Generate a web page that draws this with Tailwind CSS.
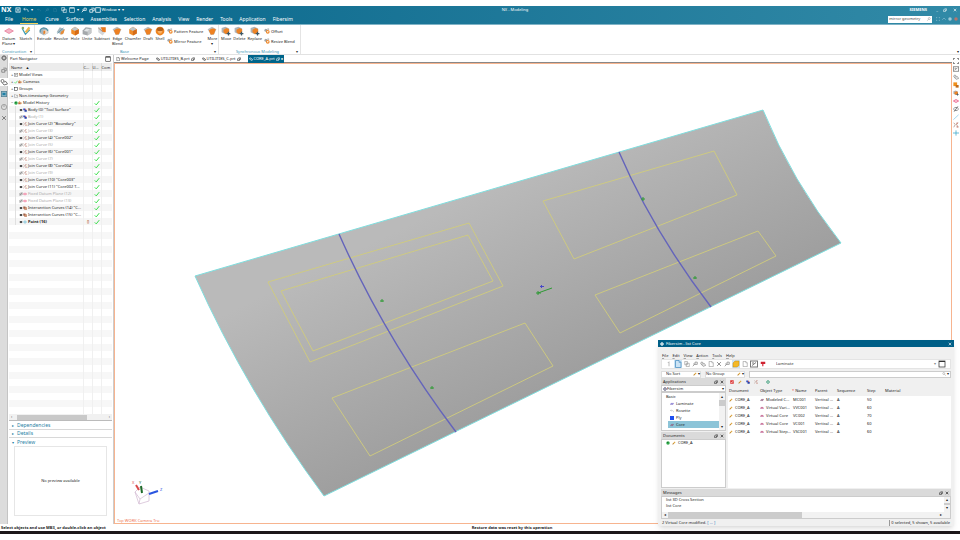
<!DOCTYPE html>
<html lang="en">
<head>
  <meta charset="UTF-8" />
  <meta name="viewport" content="width=device-width, initial-scale=1" />
  <title>NX - Modeling</title>
  <script src="https://cdn.jsdelivr.net/npm/@tailwindcss/browser@4"></script>
</head>
<body class="h-screen overflow-hidden bg-white pt-1.5 pb-1.5 flex flex-col font-['Noto_Sans','Open_Sans',sans-serif] text-[4px] leading-[6px] text-[#1c1c1c]">

<!-- Shared icons -->
<svg class="hidden">
  <symbol id="i-plane" viewBox="0 0 16 16"><path d="M1 8l7-4 7 4-7 4z" fill="#f5b5c6" stroke="#e0688c"/></symbol>
  <symbol id="i-sketch" viewBox="0 0 16 16"><path d="M2 4l5 9 7-7" fill="none" stroke="#3d9db5" stroke-width="2"/><path d="M6 9l6-8 3 2-6 8z" fill="#f0b64b"/><circle cx="3" cy="3" r="2" fill="#8a6"/></symbol>
  <symbol id="i-extrude" viewBox="0 0 16 16"><path d="M1 6l6-4 8 3v6l-7 4-7-4z" fill="#a9b8bf"/><path d="M7 7l7-2v6l-6 3z" fill="#e8dcd0"/><path d="M7 8l3-1v5l-3 1z" fill="#e8822a"/><path d="M2 10c-1-8 10-9 12-2" fill="none" stroke="#5b97aa" stroke-width="2"/></symbol>
  <symbol id="i-revolve" viewBox="0 0 16 16"><path d="M1 10l5-8 8 3-4 9z" fill="#a6b6be"/><path d="M8 9l6-4-2 7-5 2z" fill="#e78c37"/><path d="M2 12L12 3" stroke="#4d8ca5" stroke-width="1"/></symbol>
  <symbol id="i-solid" viewBox="0 0 16 16"><path d="M2 5l6-4 6 4v7l-6 3-6-3z" fill="#ef8a26"/><path d="M2 5l6 3 6-3-6-4z" fill="#c2c6c8"/><path d="M8 8v7l6-3V5z" fill="#d56b17"/></symbol>
  <symbol id="i-gray" viewBox="0 0 16 16"><path d="M1 7l5-5 9 1v8l-6 4-8-2z" fill="#a4a8ab"/><path d="M3 8l4-4 6 1-3 4z" fill="#e2e5e6"/><path d="M9 8l6-5v8l-6 4z" fill="#c6c9cb"/></symbol>
  <symbol id="i-cut" viewBox="0 0 16 16"><path d="M2 2h11v8l-4 5-7-5z" fill="#d5d7d9"/><path d="M6 2h8v8l-5-1z" fill="#ec7b1c"/><path d="M2 3l7 6" stroke="#8a5a44"/></symbol>
  <symbol id="i-edge" viewBox="0 0 16 16"><path d="M1 5l7-4 7 4-4 9H6z" fill="#b9bcbe"/><path d="M3 7q5-5 11-2l-3 8-5 1z" fill="#ee8122"/></symbol>
  <symbol id="i-shell" viewBox="0 0 16 16"><circle cx="8" cy="8" r="7" fill="#ee851f"/><ellipse cx="8" cy="5" rx="5" ry="3" fill="#b4611d"/><path d="M4 8h8l-2 4H6z" fill="#f9b063"/></symbol>
  <symbol id="i-gears" viewBox="0 0 16 16"><circle cx="5" cy="6" r="4" fill="#a3a7a9"/><circle cx="10" cy="10" r="5" fill="#ef8829"/><circle cx="10" cy="10" r="2" fill="#fff"/><path d="M11 1v4M9 3h5" stroke="#666"/></symbol>
  <symbol id="i-move" viewBox="0 0 16 16"><path d="M1 3l6-2 6 3v6l-6 3-6-3z" fill="#b0b4b7"/><path d="M4 6l5-3 4 2v5l-5 3-4-3z" fill="#ed8427"/><path d="M9 12h6M12 9v6" stroke="#3e5968" stroke-width="2"/></symbol>
  <symbol id="i-eye" viewBox="0 0 16 16"><path d="M1 8q7-9 14 0-7 9-14 0z" fill="#666"/><circle cx="8" cy="8" r="3" fill="#111"/></symbol>
  <symbol id="i-eyeoff" viewBox="0 0 16 16"><path d="M1 8q7-9 14 0-7 9-14 0z" fill="none" stroke="#777" stroke-width="2"/><path d="M3 15L13 1" stroke="#555" stroke-width="2"/></symbol>
  <symbol id="i-body" viewBox="0 0 16 16"><path d="M1 2h8v7H1z" fill="#3550c0"/><path d="M6 7h9v8H6z" fill="#2440a8"/><path d="M8 2l5 4-4 3z" fill="#d64545"/></symbol>
  <symbol id="i-join" viewBox="0 0 16 16"><path d="M2 2l4 5-4 7M14 2q-8 3-4 6t3 7" fill="none" stroke="#b08a7c" stroke-width="2"/><path d="M9 3h4M9 13h5" stroke="#c65b4e" stroke-width="2"/></symbol>
  <symbol id="i-datum" viewBox="0 0 16 16"><path d="M1 8l7-4 7 4-7 4z" fill="#fbd3de" stroke="#e8527d" stroke-width="2"/></symbol>
  <symbol id="i-inter" viewBox="0 0 16 16"><path d="M1 2h9v9H1z" fill="#a2674c"/><path d="M6 6h9v9H6z" fill="#d8956d" stroke="#7b3b2b"/></symbol>
  <symbol id="i-point" viewBox="0 0 16 16"><path d="M0 8h16M8 1v14" stroke="#3aa5c9" stroke-width="2"/></symbol>
  <symbol id="i-box" viewBox="0 0 16 16"><rect x="2" y="2" width="12" height="12" fill="none" stroke="currentColor" stroke-width="2"/></symbol>
  <symbol id="i-views" viewBox="0 0 16 16"><rect x="1" y="2" width="14" height="12" fill="#fff" stroke="#777" stroke-width="2"/><path d="M4 11l8-6M4 6h4" stroke="#777" stroke-width="2"/></symbol>
  <symbol id="i-camera" viewBox="0 0 16 16"><path d="M1 5h10v8H1z" fill="#b86a3c"/><path d="M11 8l4-3v8z" fill="#e49345"/><circle cx="6" cy="4" r="3" fill="#e0a050"/></symbol>
  <symbol id="i-folder" viewBox="0 0 16 16"><path d="M1 13V3h5l2 2h7v8z" fill="#fff" stroke="#777" stroke-width="2"/></symbol>
  <symbol id="i-hist" viewBox="0 0 16 16"><circle cx="8" cy="8" r="7" fill="#2faa4a"/><path d="M4 4h5v4H4z" fill="#1c7433"/></symbol>
  <symbol id="i-check" viewBox="0 0 16 16"><path d="M2 9l4 4 8-10" fill="none" stroke="#2fdc40" stroke-width="2.5"/></symbol>
  <symbol id="i-pencil" viewBox="0 0 16 16"><path d="M2 14l2-5 7-7 3 3-7 7z" fill="#e0a53a"/><path d="M2 14l2-5 3 3z" fill="#8a5a20"/></symbol>
  <symbol id="i-core" viewBox="0 0 16 16"><path d="M1 10l5-5h9l-4 6z" fill="#a7718f" stroke="#6f4666"/></symbol>
  <symbol id="i-vcore" viewBox="0 0 16 16"><path d="M1 10l3-5h8l3 5z" fill="#e0607c" stroke="#8b54a2"/></symbol>
  <symbol id="i-lam" viewBox="0 0 16 16"><path d="M1 9l3-4h11l-3 5H1z" fill="#7d87e6" stroke="#8b54a2"/></symbol>
  <symbol id="i-search" viewBox="0 0 16 16"><circle cx="9" cy="6" r="4" fill="none" stroke="#777" stroke-width="1.5"/><path d="M6 9l-5 6" stroke="#777" stroke-width="1.5"/></symbol>
  <symbol id="i-gear" viewBox="0 0 16 16"><circle cx="8" cy="8" r="5" fill="none" stroke="currentColor" stroke-width="3"/><path d="M8 0v16M0 8h16" stroke="currentColor" stroke-width="2"/><circle cx="8" cy="8" r="2" fill="#fff"/></symbol>
  <symbol id="i-part" viewBox="0 0 16 16"><circle cx="5" cy="6" r="3" fill="none" stroke="currentColor" stroke-width="2"/><path d="M4 9l4 5 7-2-3-5-4 1" fill="none" stroke="currentColor" stroke-width="2"/></symbol>
  <symbol id="i-page" viewBox="0 0 16 16"><path d="M3 1h7l4 4v10H3z" fill="none" stroke="currentColor" stroke-width="1.5"/><path d="M10 1v4h4" fill="none" stroke="currentColor"/></symbol>
  <symbol id="i-copy" viewBox="0 0 16 16"><path d="M2 1h7v9H2zM6 6h8v9H6z" fill="none" stroke="currentColor" stroke-width="1.5"/></symbol>
  <symbol id="i-save" viewBox="0 0 16 16"><path d="M2 2h12v12H2zM5 2v5h6V2M5 14v-4h6v4" fill="none" stroke="currentColor" stroke-width="1.5"/></symbol>
  <symbol id="i-tool" viewBox="0 0 16 16"><path d="M2 14l6-6M8 3h6v6H8zM3 8h4" fill="none" stroke="currentColor" stroke-width="2"/></symbol>
  <symbol id="i-fit" viewBox="0 0 16 16"><path d="M1 5V1h4M11 1h4v4M15 11v4h-4M5 15H1v-4" fill="none" stroke="currentColor" stroke-width="2"/></symbol>
  <symbol id="i-max" viewBox="0 0 16 16"><rect x="2" y="2" width="12" height="12" fill="none" stroke="currentColor" stroke-width="1.5"/><path d="M2 3h12" stroke="currentColor" stroke-width="2"/></symbol>
  <symbol id="i-x" viewBox="0 0 16 16"><path d="M3 3l10 10M13 3L3 13" stroke="currentColor" stroke-width="2.5"/></symbol>
  <symbol id="i-pin" viewBox="0 0 16 16"><path d="M2 7h8v7H2zM6 3h8v7h-4" fill="none" stroke="currentColor" stroke-width="2"/></symbol>
  <symbol id="i-undo" viewBox="0 0 16 16"><path d="M5 2L2 6l4 3M2 6h8q4 0 4 7" fill="none" stroke="currentColor" stroke-width="1.5"/></symbol>
</svg>

<!-- Title bar and menu -->
<header class="bg-linear-to-r from-[#00658a] to-[#318aa7] text-white border-b border-[#7fb3c6]">
  <div class="flex items-center h-2 px-px">
    <div class="flex-1 flex items-center gap-0.5">
      <span class="text-[7px] leading-2 font-bold">NX</span>
      <svg class="size-1.5 ml-0.5"><use href="#i-save"/></svg>
      <svg class="size-1.5"><use href="#i-undo"/></svg><span>▾</span>
      <span class="flex gap-1 text-[#3a86a3] px-0.5"><svg class="size-1"><use href="#i-undo"/></svg><svg class="size-1"><use href="#i-tool"/></svg><svg class="size-1"><use href="#i-page"/></svg></span>
      <svg class="size-1.5"><use href="#i-copy"/></svg>
      <svg class="size-1.5"><use href="#i-max"/></svg><span>▾</span>
      <svg class="size-1.5"><use href="#i-tool"/></svg>
      <button class="flex items-center"><svg class="size-1.5"><use href="#i-pin"/></svg><svg class="size-1.5"><use href="#i-box"/></svg>Window ▾</button><span>▾</span>
    </div>
    <span class="pl-18">NX - Modeling</span>
    <div class="flex-1 flex items-center justify-end gap-1 pr-0.5">
      <span class="font-bold mr-1">SIEMENS</span>
      <button aria-label="Minimize" class="w-1">_</button>
      <button aria-label="Restore"><svg class="size-1"><use href="#i-pin"/></svg></button>
      <button aria-label="Close"><svg class="size-1 ml-0.5"><use href="#i-x"/></svg></button>
    </div>
  </div>
  <nav class="flex items-center h-2.5 pl-1 pr-0.5 text-[5px] leading-2">
    <div class="flex-1 flex gap-[7px] pl-px">
      <button>File</button>
      <button class="text-[#f2d35c] border-b border-[#f2d35c] px-0.5">Home</button>
      <button>Curve</button>
      <button>Surface</button>
      <button>Assemblies</button>
      <button>Selection</button>
      <button>Analysis</button>
      <button>View</button>
      <button>Render</button>
      <button>Tools</button>
      <button>Application</button>
      <button>Fibersim</button>
    </div>
    <label class="flex items-center bg-white w-11 h-[7px] px-px text-[4px] text-[#444]">
      <input aria-label="Command finder" value="mirror geometry" class="min-w-0 flex-1 h-1.5 outline-none" />
      <svg class="size-1"><use href="#i-search"/></svg>
    </label>
    <div class="flex items-center gap-0.5 pl-1 text-[#a8cfdc]">
      <svg class="size-1"><use href="#i-fit"/></svg>
      <svg class="size-1" viewBox="0 0 16 16"><path d="M1 11l7-7 7 7" fill="none" stroke="currentColor" stroke-width="2"/></svg>
      <svg class="size-1" viewBox="0 0 16 16"><circle cx="8" cy="8" r="7" fill="#9cc8d6"/></svg>
      <svg class="size-1" viewBox="0 0 16 16"><circle cx="8" cy="8" r="7" fill="#b4746c"/></svg>
    </div>
  </nav>
</header>

<!-- Ribbon -->
<section class="flex h-7.5 border-b border-[#e2e2e2] leading-[5px]">
  <div class="flex flex-col justify-between w-[35px] border-r border-[#e4e4e4] pt-px">
    <div class="flex gap-1 pl-0.5">
      <button class="flex flex-col items-center"><svg class="size-2.5"><use href="#i-plane"/></svg>Datum<br>Plane ▾</button>
      <button class="flex flex-col items-center self-start"><svg class="size-2.5"><use href="#i-sketch"/></svg>Sketch</button>
    </div>
    <div class="flex justify-between pl-0.5 pr-0.5 text-[#3a94b5]">Construction <span class="text-[#333]">▾</span></div>
  </div>
  <div class="flex flex-col justify-between w-[184px] border-r border-[#e4e4e4] pt-px">
    <div class="flex items-start gap-0.5 pl-0.5">
      <button class="flex flex-col items-center"><svg class="size-2.5"><use href="#i-extrude"/></svg>Extrude</button>
      <button class="flex flex-col items-center"><svg class="size-2.5"><use href="#i-revolve"/></svg>Revolve</button>
      <button class="flex flex-col items-center"><svg class="size-2.5"><use href="#i-solid"/></svg>Hole</button>
      <button class="flex flex-col items-center"><svg class="size-2.5"><use href="#i-gray"/></svg>Unite</button>
      <button class="flex flex-col items-center"><svg class="size-2.5"><use href="#i-cut"/></svg>Subtract</button>
      <button class="flex flex-col items-center"><svg class="size-2.5"><use href="#i-edge"/></svg>Edge<br>Blend</button>
      <button class="flex flex-col items-center"><svg class="size-2.5"><use href="#i-solid"/></svg>Chamfer</button>
      <button class="flex flex-col items-center"><svg class="size-2.5"><use href="#i-edge"/></svg>Draft</button>
      <button class="flex flex-col items-center"><svg class="size-2.5"><use href="#i-shell"/></svg>Shell</button>
      <div class="flex flex-col gap-1 pt-0.5">
        <button class="flex items-center gap-px"><svg class="size-1.5"><use href="#i-gears"/></svg>Pattern Feature</button>
        <button class="flex items-center gap-px"><svg class="size-1.5"><use href="#i-gears"/></svg>Mirror Feature</button>
      </div>
      <button class="flex flex-col items-center ml-0.5"><svg class="size-2.5"><use href="#i-edge"/></svg>More<br>▾</button>
    </div>
    <div class="flex text-[#3a94b5] pr-0.5"><span class="flex-1 text-center">Base</span><span class="text-[#333]">▾</span></div>
  </div>
  <div class="flex flex-col justify-between w-[82px] border-r border-[#e4e4e4] pt-px">
    <div class="flex items-start gap-0.5 pl-0.5">
      <button class="flex flex-col items-center"><svg class="size-2.5"><use href="#i-move"/></svg>Move</button>
      <button class="flex flex-col items-center"><svg class="size-2.5"><use href="#i-move"/></svg>Delete</button>
      <button class="flex flex-col items-center"><svg class="size-2.5"><use href="#i-move"/></svg>Replace</button>
      <div class="flex flex-col gap-1 pt-0.5">
        <button class="flex items-center gap-px"><svg class="size-1.5"><use href="#i-gears"/></svg>Offset</button>
        <button class="flex items-center gap-px"><svg class="size-1.5"><use href="#i-gears"/></svg>Resize Blend</button>
      </div>
    </div>
    <div class="flex text-[#3a94b5] pr-0.5"><span class="flex-1 text-center">Synchronous Modeling</span><span class="text-[#333]">▾</span></div>
  </div>
  <div class="flex-1 flex items-end justify-end pr-px">▾</div>
</section>

<div class="flex-1 min-h-0 flex relative">
  <!-- Resource bar -->
  <aside class="w-2 bg-[#dcdcdc] border-r border-[#c4c4c4] flex flex-col items-center text-[#777]">
    <svg class="size-1.5"><use href="#i-gear"/></svg>
    <div class="flex flex-col items-center gap-[5px] pt-1.5">
      <svg class="size-1.5"><use href="#i-pin"/></svg>
      <svg class="size-2 bg-white"><use href="#i-part"/></svg>
      <svg class="size-1.5" viewBox="0 0 16 16"><rect x="1" y="1" width="14" height="14" fill="#8bb7c8" stroke="#4f7f92" stroke-width="2"/><path d="M4 5h8v6H4z" fill="#1f7fa5"/></svg>
      <svg class="size-1.5 mt-0.5" viewBox="0 0 16 16"><circle cx="8" cy="8" r="7" fill="none" stroke="#777" stroke-width="1.5"/><path d="M8 3v5" stroke="#777" stroke-width="1.5"/></svg>
      <svg class="size-1.5"><use href="#i-x"/></svg>
    </div>
  </aside>

  <!-- Part Navigator -->
  <section class="w-[105px] flex flex-col px-px">
    <div class="flex items-center justify-between h-2 px-px">
      <h2>Part Navigator</h2>
      <button aria-label="Undock"><svg class="size-1.5"><use href="#i-max"/></svg></button>
    </div>
    <div class="flex-1 min-h-0 overflow-hidden flex flex-col">
      <table class="w-full table-fixed whitespace-nowrap leading-[7px]">
        <colgroup><col /><col class="w-[9px]" /><col class="w-[9px]" /><col class="w-[11px]" /></colgroup>
        <thead>
          <tr class="h-2 bg-[#ececec] text-left">
            <th class="font-normal pl-0.5">Name &nbsp; ▲</th>
            <th class="font-normal border-l border-[#dadada]">C...</th>
            <th class="font-normal border-l border-[#dadada]">U...</th>
            <th class="font-normal border-l border-[#dadada]">Com</th>
          </tr>
        </thead>
        <tbody id="tree"></tbody>
      </table>
      <div class="flex-1 flex bg-[repeating-linear-gradient(#fff_0_7px,#f7f7f7_7px_14px)]">
        <div class="flex-1"></div>
        <div class="w-[9px] border-l border-[#f0f0f0]"></div>
        <div class="w-[9px] border-l border-[#f0f0f0]"></div>
        <div class="w-[11px] border-l border-[#f0f0f0]"></div>
      </div>
    </div>
    <div class="flex items-center h-[7px] gap-0.5 px-0.5 bg-[#f1f1f1] border-b border-[#bbb]">
      <span class="w-0.5">‹</span><div class="w-[70px] h-[5px] ml-0.5 bg-[#c9c9c9]"></div><span class="ml-auto">›</span>
    </div>
    <div class="text-[5px] leading-[7px] text-[#1f7fa5] pt-px">
      <button class="flex gap-0.5 w-full h-2 items-center pl-0.5 border-b border-[#d8d8d8]"><span class="w-1 text-[4px]">▸</span>Dependencies</button>
      <button class="flex gap-0.5 w-full h-2 items-center pl-0.5 border-b border-[#d8d8d8]"><span class="w-1 text-[4px]">▸</span>Details</button>
      <button class="flex gap-0.5 w-full h-2 items-center pl-0.5"><span class="w-1 text-[4px]">▾</span>Preview</button>
    </div>
    <div class="h-[70px] mx-[5px] mb-2 border border-[#e6e6e6] flex items-center justify-center">No preview available</div>
  </section>

  <main class="flex-1 min-w-0 flex border-l border-[#ccc]">
    <div class="flex-1 min-w-0 flex flex-col">
      <!-- Part tabs -->
      <div class="flex items-center h-2 border-b border-[#888] gap-[7px] pl-0.5">
        <button class="flex items-center gap-px"><svg class="size-1"><use href="#i-page"/></svg>Welcome Page</button>
        <button class="flex items-center gap-px"><svg class="size-1"><use href="#i-part"/></svg>UTILITIES_B.prt<svg class="size-1"><use href="#i-pin"/></svg></button>
        <button class="flex items-center gap-px"><svg class="size-1"><use href="#i-part"/></svg>UTILITIES_C.prt<svg class="size-1"><use href="#i-pin"/></svg></button>
        <button class="flex items-center gap-px h-2 px-px bg-[#00658a] text-white"><svg class="size-1"><use href="#i-part"/></svg>CORE_A.prt<svg class="size-1"><use href="#i-pin"/></svg>●</button>
      </div>
      <!-- Graphics window -->
      <svg class="flex-1 min-h-0 w-full border border-[#f7b48f]" viewBox="115 64 836 459" preserveAspectRatio="xMidYMid meet">
        <defs>
          <linearGradient id="sheet" gradientUnits="userSpaceOnUse" x1="480" y1="190" x2="570" y2="375">
            <stop offset="0" stop-color="#bababa"/><stop offset="1" stop-color="#9f9f9f"/>
          </linearGradient>
        </defs>
        <path d="M195 276L763 110Q792 181 841 243L324 496Q247 392 195 276z" fill="url(#sheet)" stroke="#7fdede"/>
        <g fill="none" stroke="#d0cc7c" stroke-width=".9">
          <path d="M268 282L469 223L503 286L310 362z"/>
          <path d="M281 291L468 235L493 281L313 351z"/>
          <path d="M332 398L525 323L553 366L370 456z"/>
          <path d="M543 201L714 151L737 195L574 259z"/>
          <path d="M595 295L758 231L776 256L620 333z"/>
        </g>
        <g fill="none" stroke="#6464bb" stroke-width="1.4">
          <path d="M339 234Q385 338 456 432"/>
          <path d="M619 152Q653 231 711 307"/>
        </g>
        <g stroke="#2f9a35" fill="none">
          <path d="M380 301h4M382 299v3M430 388h4M432 386v3M641 199h4M643 197v4M693 278h4M695 276v3"/>
          <path d="M536 293h5M538 291v4M538 293L552 288"/>
        </g>
        <path d="M540 286.500h4M541.500 285v3" stroke="#4747c8"/>
        <g fill="none" stroke="#d5bfd5" stroke-width=".8">
          <path d="M135 492l4 12 10-3v-10l-9-4zM135 492l5 7 9-6M140 499l-1 5"/>
        </g>
        <g stroke-width="2">
          <path d="M139 490l-3-5" stroke="#d94a4a"/>
          <path d="M142 493l-1-7" stroke="#1f6b2a"/>
          <path d="M149 494l9-3" stroke="#2a55e0"/>
        </g>
        <g font-size="4">
          <text x="132" y="484" fill="#d94a4a">X</text><text x="139" y="484" fill="#1f6b2a">Y</text><text x="160" y="491" fill="#2a55e0">Z</text>
          <text x="117" y="522" fill="#ee7350">Top WORK Camera Tru</text>
        </g>
      </svg>
    </div>
    <!-- Right border bar -->
    <div class="w-2 flex flex-col items-center gap-0.5 pt-[3px] text-[#888]">
      <svg class="size-1.5 text-[#444]"><use href="#i-fit"/></svg>
      <svg class="size-1.5"><use href="#i-views"/></svg>
      <svg class="size-1.5"><use href="#i-part"/></svg>
      <svg class="size-1.5" viewBox="0 0 16 16"><path d="M1 1h10v10H1z" fill="#f0901e"/><path d="M7 8h8v7H7z" fill="#c26a1a"/></svg>
      <svg class="size-1.5"><use href="#i-move"/></svg>
      <svg class="size-1.5"><use href="#i-datum"/></svg>
      <svg class="size-1.5"><use href="#i-eyeoff"/></svg>
      <svg class="size-1.5" viewBox="0 0 16 16"><path d="M1 15L15 2" stroke="#5fb8e0" stroke-width="1.5"/></svg>
      <svg class="size-1.5"><use href="#i-join"/></svg>
      <svg class="size-1.5"><use href="#i-point"/></svg>
    </div>
  </main>

  <!-- Fibersim window -->
  <section class="absolute right-1.5 -bottom-0.5 w-[296px] h-[186px] flex flex-col bg-[#f0f0f0] shadow-md">
    <div class="flex items-center gap-0.5 h-[7px] px-0.5 bg-[#005f87] text-white">
      <svg class="size-1"><use href="#i-gear"/></svg><h2>Fibersim - list Core</h2>
      <button aria-label="Close" class="ml-auto"><svg class="size-1"><use href="#i-x"/></svg></button>
    </div>
    <div class="flex-1 min-h-0 flex flex-col px-[3px] pt-[5px]">
      <nav class="flex items-center gap-1 h-[7px] px-px decoration-black/30">
        <button><u class="decoration-black/30">F</u>ile</button><button><u class="decoration-black/30">E</u>dit</button><button><u class="decoration-black/30">V</u>iew</button><button><u class="decoration-black/30">A</u>ction</button><button><u class="decoration-black/30">T</u>ools</button><button><u class="decoration-black/30">H</u>elp</button>
      </nav>
      <div class="flex items-center gap-0.5 h-2.5 bg-white border border-[#e4e4e4] px-1 text-[#888]">
        <svg class="size-1.5" viewBox="0 0 16 16"><path d="M8 2v12M5 5l3-3" fill="none" stroke="#888" stroke-width="1.5"/></svg>
        <svg class="size-2 bg-[#cce4f5] text-[#4b8fc0]"><use href="#i-page"/></svg>
        <svg class="size-1.5"><use href="#i-copy"/></svg>
        <svg class="size-1.5"><use href="#i-tool"/></svg>
        <svg class="size-1.5"><use href="#i-part"/></svg>
        <svg class="size-1.5"><use href="#i-page"/></svg>
        <svg class="size-1.5"><use href="#i-x"/></svg>
        <svg class="size-1.5"><use href="#i-tool"/></svg>
        <svg class="size-2 bg-[#cce4f5]" viewBox="0 0 16 16"><path d="M2 6l4-4h8v9l-4 3H2z" fill="#f3b928" stroke="#c58b12"/></svg>
        <svg class="size-1.5"><use href="#i-page"/></svg>
        <svg class="size-2"><use href="#i-views"/></svg>
        <svg class="size-1.5" viewBox="0 0 16 16"><path d="M2 2h12v6H9v6H6V8H2z" fill="#cf2230"/></svg>
        <select aria-label="Filter" class="flex-1 h-2 ml-2 appearance-none text-[#333]"><option>Laminate</option></select>
        <span>▾</span>
        <button aria-label="Panel"><svg class="size-2 text-[#333]"><use href="#i-max"/></svg></button>
      </div>
      <div class="flex items-center gap-1 h-2 mt-px">
        <label class="flex items-center w-10 h-[7px] bg-white border border-[#ddd] pl-1"><select aria-label="Sort" class="flex-1 min-w-0 appearance-none"><option>No Sort</option></select><svg class="size-1"><use href="#i-pencil"/></svg>&nbsp;▾</label>
        <label class="flex items-center w-10 h-[7px] bg-white border border-[#ddd]"><select aria-label="Group" class="flex-1 min-w-0 appearance-none"><option>No Group</option></select><svg class="size-1"><use href="#i-pencil"/></svg>&nbsp;▾</label>
        <label class="flex items-center flex-1 h-[7px] bg-white border border-[#ccc] px-px"><input aria-label="Search" class="flex-1 h-1" /><svg class="size-1 -scale-x-100"><use href="#i-search"/></svg>&nbsp;▾</label>
      </div>
      <div class="flex gap-0.5 h-[110px]">
        <div class="w-[65px] flex flex-col">
          <div class="flex items-center h-[7px] bg-[#dadada] px-0.5 gap-0.5"><h3 class="flex-1">Applications</h3><svg class="size-1"><use href="#i-pin"/></svg><svg class="size-1"><use href="#i-x"/></svg></div>
          <label class="flex items-center h-[7px] bg-white border border-[#ccc] px-px"><svg class="size-1 text-[#557]"><use href="#i-gear"/></svg><select aria-label="Application" class="flex-1 min-w-0 appearance-none"><option>Fibersim</option></select>▾</label>
          <div class="h-[39px] flex bg-white border border-[#ccc] overflow-hidden leading-[7px]">
            <ul class="flex-1 min-w-0">
              <li class="pl-1">Basic</li>
              <li class="flex items-center gap-0.5 pl-2"><svg class="size-1"><use href="#i-lam"/></svg>Laminate</li>
              <li class="flex items-center gap-0.5 pl-2"><svg class="size-1 text-[#999]"><use href="#i-undo"/></svg>Rosette</li>
              <li class="flex items-center gap-0.5 pl-2"><svg class="size-1 bg-[#1e50f0]"></svg>Ply</li>
              <li class="flex items-center gap-0.5 ml-1.5 pl-0.5 bg-[#8cc4d8]"><svg class="size-1"><use href="#i-core"/></svg>Core</li>
            </ul>
            <div class="w-1.5 bg-[#f2f2f2] flex flex-col items-center"><span>▴</span><div class="w-full h-1.5 bg-[#ccc]"></div><span class="mt-auto">▾</span></div>
          </div>
          <div class="flex items-center h-[7px] mt-px bg-[#dadada] px-0.5 gap-0.5"><h3 class="flex-1">Documents</h3><svg class="size-1"><use href="#i-pin"/></svg><svg class="size-1"><use href="#i-x"/></svg></div>
          <div class="flex-1 bg-white border border-[#ccc] pl-1">
            <div class="flex items-center gap-0.5"><svg class="size-1"><use href="#i-hist"/></svg><svg class="size-1"><use href="#i-pencil"/></svg>CORE_A</div>
          </div>
        </div>
        <div class="flex-1 min-w-0 flex flex-col bg-white">
          <div class="flex items-center gap-1 h-2 px-0.5 bg-[#f0f0f0] text-[#c9305b]">
            <svg class="size-1" viewBox="0 0 16 16"><path d="M1 1h14v14H1z" fill="#d33"/><path d="M4 8l3 4 6-9" fill="none" stroke="#fff" stroke-width="2"/></svg>
            <svg class="size-1"><use href="#i-pencil"/></svg>
            <svg class="size-1"><use href="#i-body"/></svg>
            <svg class="size-1"><use href="#i-join"/></svg>
            <svg class="size-1 ml-1 text-[#3a9c78]"><use href="#i-gear"/></svg>
          </div>
          <table class="w-full table-fixed text-left whitespace-nowrap">
            <colgroup><col class="w-[30px]" /><col class="w-[34px]" /><col class="w-[22px]" /><col class="w-[22px]" /><col class="w-[29px]" /><col class="w-[18px]" /><col /></colgroup>
            <thead>
              <tr class="h-2.5 bg-[#f0f0f0]">
                <th class="font-normal pl-px">Document</th><th class="font-normal pl-0.5">Object Type</th><th class="font-normal"><span class="text-[#e33]">*</span> Name</th><th class="font-normal pl-px">Parent</th><th class="font-normal pl-px">Sequence</th><th class="font-normal pl-0.5">Step</th><th class="font-normal pl-0.5">Material</th>
              </tr>
            </thead>
            <tbody id="cores"></tbody>
          </table>
        </div>
      </div>
      <div class="flex items-center h-[7px] mt-px bg-[#dadada] px-0.5 gap-0.5"><h3 class="flex-1">Messages</h3><svg class="size-1"><use href="#i-pin"/></svg><svg class="size-1"><use href="#i-x"/></svg></div>
      <div class="h-[23px] flex bg-white border border-[#ccc]">
        <div class="flex-1 flex flex-col justify-between overflow-hidden">
          <div class="flex flex-col pl-1"><p>list 3D Cross Section</p><p>list Core</p></div>
          <div class="flex items-center gap-0.5 h-1.5 px-0.5 bg-[#f2f2f2]"><span>◂</span><div class="w-[134px] h-1.5 bg-[#ccc]"></div><span class="ml-auto">▸</span></div>
        </div>
        <div class="w-1.5 bg-[#f2f2f2] flex flex-col items-center"><span>▴</span><div class="w-full h-0.5 bg-[#ccc]"></div><span>▾</span></div>
      </div>
      <div class="flex-1 flex items-center justify-between px-px">
        <span>2 Virtual Core modified. <a href="#" class="text-[#2370b8]">[ ... ]</a></span>
        <span class="border-l border-[#999] pl-px">0 selected, 5 shown, 5 available</span>
      </div>
    </div>
  </section>
</div>

<!-- Status bar -->
<footer class="flex h-[7px] items-center px-px font-bold">
  <span class="flex-1">Select objects and use MB3, or double-click an object</span>
  <span class="pl-16">Restore data was reset by this operation</span>
  <span class="flex-1"></span>
</footer>
<div class="h-[3px] bg-[#1c1719]"></div>

<script>
  const features = [
    ["Body (0) \"Tool Surface\"", "body", true],
    ["Body (1)", "body", false],
    ["Join Curve (2) \"Boundary\"", "join", true],
    ["Join Curve (3)", "join", false],
    ["Join Curve (4) \"Core002\"", "join", true],
    ["Join Curve (5)", "join", false],
    ["Join Curve (6) \"Core001\"", "join", true],
    ["Join Curve (7)", "join", false],
    ["Join Curve (8) \"Core004\"", "join", true],
    ["Join Curve (9)", "join", false],
    ["Join Curve (10) \"Core003\"", "join", true],
    ["Join Curve (11) \"Core002 T...", "join", true],
    ["Fixed Datum Plane (12)", "datum", false],
    ["Fixed Datum Plane (13)", "datum", false],
    ["Intersection Curves (14) \"C...", "inter", true],
    ["Intersection Curves (15) \"C...", "inter", true],
    ["Point (16)", "point", true],
  ];
  const icon = (name) => `<svg class="size-1 shrink-0"><use href="#i-${name}"/></svg>`;
  const tick = `<svg class="size-1.5 shrink-0"><use href="#i-check"/></svg>`;
  const cell = (content) => `<td class="p-0 border-l border-[#f0f0f0]"><div class="flex items-center justify-center h-[7px]">${content}</div></td>`;

  const groups = [
    ["+", icon("views"), "Model Views", ""],
    ["+", icon("check") + icon("camera"), "Cameras", ""],
    ["+", icon("box"), "Groups", ""],
    ["+", icon("folder"), "Non-timestamp Geometry", ""],
    ["−", icon("hist") + icon("camera"), "Model History", tick],
  ];

  const groupRows = groups.map(([sign, icons, label, mark]) => `
    <tr class="h-[7px] even:bg-[#f6f6f6]">
      <td class="p-0"><div class="flex items-center h-[7px] pl-0.5"><span class="w-[3px]">${sign}</span>${icons}<span class="pl-px">${label}</span></div></td>
      ${cell("")}${cell(mark)}${cell("")}
    </tr>`);
  const featureRows = features.map(([label, kind, shown], i) => {
    const last = i === features.length - 1;
    const tone = last ? "font-bold" : shown ? "" : "text-[#aaa]";
    return `
    <tr class="h-[7px] even:bg-[#f6f6f6] ${tone}">
      <td class="p-0"><div class="flex items-center h-[7px] pl-1.5"><span class="w-1 h-[7px] border-l border-[#e0e0e0]"></span>${icon(shown ? "eye" : "eyeoff")}${icon(kind)}<span class="pl-px">${label}</span></div></td>
      ${cell(last ? "<span class='text-[#b5673c]'>▯</span>" : "")}${cell(tick)}${cell("")}
    </tr>`;
  });
  document.getElementById("tree").innerHTML = groupRows.concat(featureRows).join("");

  const cores = [
    ["core", "Modeled C...", "MC001", "50"],
    ["vcore", "Virtual Vari...", "VVC001", "60"],
    ["vcore", "Virtual Core", "VC002", "70"],
    ["vcore", "Virtual Core", "VC001", "60"],
    ["vcore", "Virtual Step...", "VSC001", "60"],
  ];
  document.getElementById("cores").innerHTML = cores.map(([kind, type, name, step]) => `
    <tr class="h-2">
      <td class="p-0 pl-px"><div class="flex items-center gap-0.5">${icon("pencil")}CORE_A</div></td>
      <td class="p-0"><div class="flex items-center gap-0.5 pl-0.5">${icon(kind)}${type}</div></td>
      <td class="p-0 pl-px">${name}</td><td class="p-0 pl-px">Vertical ...</td><td class="p-0 pl-px">A</td><td class="p-0 pl-0.5">${step}</td><td class="p-0"></td>
    </tr>`).join("");
</script>

</body>
</html>
